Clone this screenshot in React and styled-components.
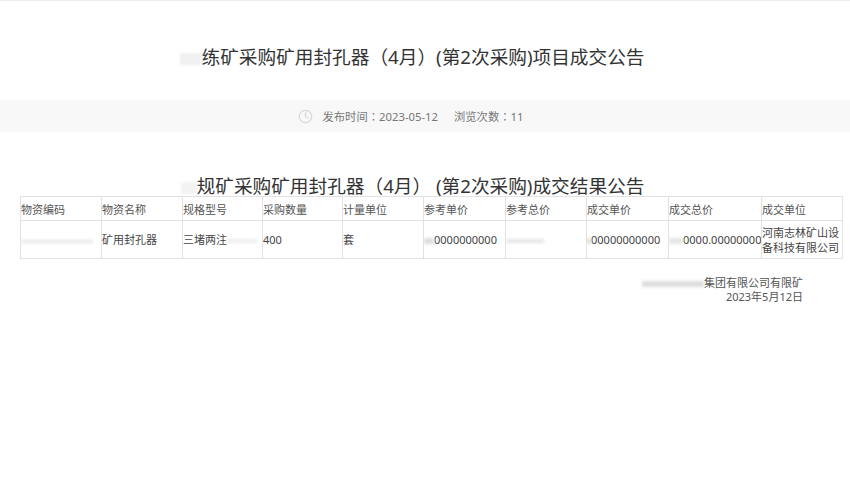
import React from "react";
import styled, { createGlobalStyle } from "styled-components";
import { Clock } from "lucide-react";

const fontStack = `"Noto Sans", "Noto Sans CJK SC", sans-serif`;

const GlobalStyle = createGlobalStyle`
  html, body {
    margin: 0;
    padding: 0;
    background: #fff;
    font-family: ${fontStack};
    overflow: hidden;
  }
`;

const Page = styled.div`
  width: 850px;
  height: 487px;
  border-top: 1px solid #eee;
  box-sizing: border-box;
  color: #333;
`;

const Title = styled.h1`
  margin: 0;
  height: 99px;
  padding-top: 41px;
  padding-right: 26px;
  box-sizing: border-box;
  font-size: 18.67px;
  line-height: 28px;
  font-weight: 400;
  text-align: center;
  white-space: nowrap;
`;

/* full-width punctuation sits centred in the reference, as it does in the TC font */
const Punct = styled.span`
  font-family: "Noto Sans CJK TC", sans-serif;
`;

const MetaBar = styled.div`
  height: 32px;
  background: #f8f8f8;
  display: flex;
  align-items: center;
  justify-content: center;
  padding-right: 29px;
  color: #777;
  font-size: 11.3px;
`;

const MetaIcon = styled(Clock)`
  color: #d8d8d8;
  margin-right: 10px;
`;

const MetaItem = styled.span`
  margin-right: ${(p) => p.$gap || 0}px;
`;

const Article = styled.div`
  padding: 40px 8px 0 20px;
`;

const SubTitle = styled.h2`
  margin: 0;
  height: 24px;
  font-size: 18.67px;
  line-height: 26px;
  font-weight: 400;
  text-align: center;
  white-space: pre;
  padding-right: 37px;
`;

const Table = styled.table`
  border-collapse: collapse;
  table-layout: fixed;
  width: 822px;
  font-size: 11px;
`;

const HeadCell = styled.th`
  box-sizing: border-box;
  width: ${(p) => p.$w}px;
  height: 24px;
  padding: 0;
  border: 1px solid #e2e2e2;
  font-weight: 400;
  text-align: left;
  color: #555;
  overflow: hidden;
  white-space: nowrap;
`;

const Cell = styled.td`
  box-sizing: border-box;
  height: 38px;
  padding: 0;
  border: 1px solid #e2e2e2;
  color: #444;
  line-height: 15px;
  overflow: hidden;
  white-space: ${(p) => (p.$wrap ? "normal" : "nowrap")};
`;

const Smudge = styled.span`
  display: inline-block;
  width: ${(p) => p.$w}px;
  height: ${(p) => p.$h || 4}px;
  background: ${(p) => p.$tone || "#e6e6e6"};
  filter: blur(1.5px);
  vertical-align: middle;
`;

const Signature = styled.div`
  margin-top: 17px;
  padding-right: 39px;
  font-size: 11px;
  line-height: 14px;
  text-align: right;
  color: #555;
`;

const columns = [
  { name: "物资编码", w: 81 },
  { name: "物资名称", w: 81 },
  { name: "规格型号", w: 80 },
  { name: "采购数量", w: 80 },
  { name: "计量单位", w: 81 },
  { name: "参考单价", w: 82 },
  { name: "参考总价", w: 81 },
  { name: "成交单价", w: 82 },
  { name: "成交总价", w: 93 },
  { name: "成交单位", w: 81 },
];

export default function App() {
  return (
    <Page>
      <GlobalStyle />
      <Title>
        <Smudge $w={22} $h={12} $tone="#f0f0f0" />
        练矿采购矿用封孔器<Punct>（</Punct>4月<Punct>）</Punct>(第2次采购)项目成交公告
      </Title>
      <MetaBar>
        <MetaIcon size={15} strokeWidth={2} />
        <MetaItem $gap={16}>
          发布时间<Punct>：</Punct>2023-05-12
        </MetaItem>
        <MetaItem>
          浏览次数<Punct>：</Punct>11
        </MetaItem>
      </MetaBar>
      <Article>
        <SubTitle>
          <Smudge $w={16} $h={12} $tone="#f3f3f3" />
          规矿采购矿用封孔器<Punct>（</Punct>4月<Punct>）</Punct> (第2次采购)成交结果公告
        </SubTitle>
        <Table>
          <thead>
            <tr>
              {columns.map((c) => (
                <HeadCell key={c.name} $w={c.w}>
                  {c.name}
                </HeadCell>
              ))}
            </tr>
          </thead>
          <tbody>
            <tr>
              <Cell>
                <Smudge $w={72} $h={3} />
              </Cell>
              <Cell>矿用封孔器</Cell>
              <Cell>
                三堵两注
                <Smudge $w={30} $h={4} $tone="#eeeeee" />
              </Cell>
              <Cell>400</Cell>
              <Cell>套</Cell>
              <Cell>
                <Smudge $w={10} $h={6} $tone="#dddddd" />
                0000000000
              </Cell>
              <Cell>
                <Smudge $w={38} $h={4} />
              </Cell>
              <Cell>
                <Smudge $w={4} $h={6} $tone="#dddddd" />
                00000000000
              </Cell>
              <Cell>
                <Smudge $w={14} $h={6} />
                0000.00000000
              </Cell>
              <Cell $wrap>河南志林矿山设备科技有限公司</Cell>
            </tr>
          </tbody>
        </Table>
        <Signature>
          <div>
            <Smudge $w={62} $h={6} $tone="#dddddd" />
            集团有限公司有限矿
          </div>
          <div>2023年5月12日</div>
        </Signature>
      </Article>
    </Page>
  );
}
